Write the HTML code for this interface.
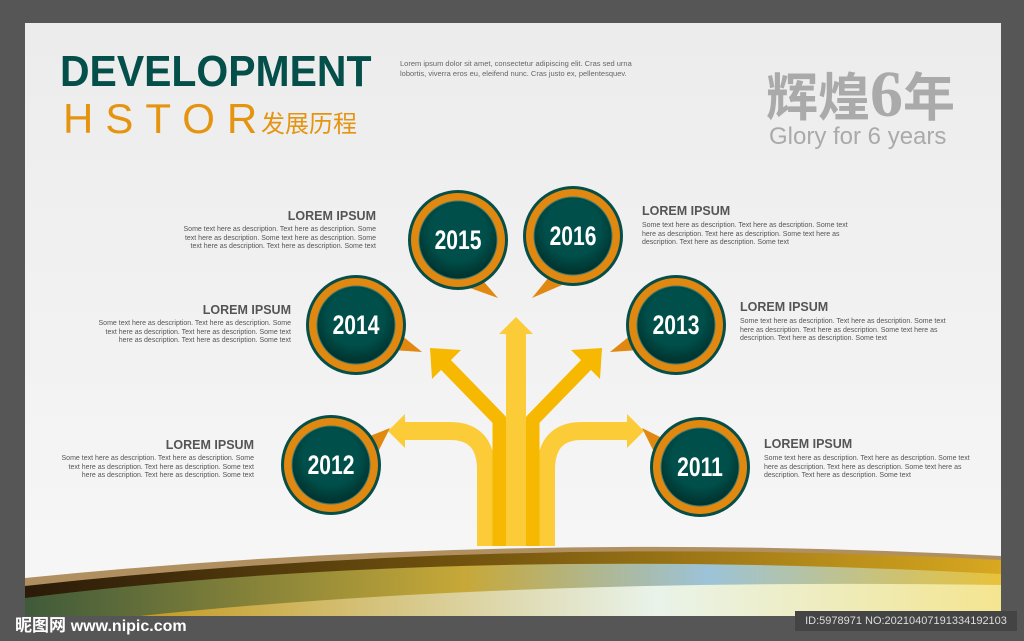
<!DOCTYPE html>
<html><head><meta charset="utf-8"><style>
body{margin:0;width:1024px;height:641px;background:#565656;position:relative;overflow:hidden;font-family:"Liberation Sans","Noto Sans CJK SC",sans-serif}
#card{position:absolute;left:25px;top:23px;width:976px;height:593px;background:linear-gradient(#ececec,#f7f7f7);overflow:hidden}
.t{position:absolute;font-size:12.5px;font-weight:bold;color:#555}
.d{position:absolute;font-size:7px;line-height:8.6px;color:#555;width:200px}
.r{text-align:right}
.y{position:absolute;color:#fff;font-weight:bold;font-size:27px;transform:scaleX(.78);width:100px;text-align:center;font-family:"Liberation Sans Narrow","Liberation Sans",sans-serif}
</style></head><body>
<div id="card">
<svg width="976" height="593" style="position:absolute;left:0;top:0">
<defs>
<radialGradient id="g" cx="50%" cy="40%" r="60%"><stop offset="0.6" stop-color="#004f4a"/><stop offset="1" stop-color="#00302c"/></radialGradient>
<linearGradient id="w1" x1="0" x2="1"><stop offset="0" stop-color="#2a1a08"/><stop offset=".5" stop-color="#7a5a10"/><stop offset="1" stop-color="#d8a820"/></linearGradient>
<linearGradient id="w2" x1="0" x2="1"><stop offset="0" stop-color="#3f5a3a"/><stop offset=".45" stop-color="#c7a838"/><stop offset=".7" stop-color="#9cc3d8"/><stop offset="1" stop-color="#e8c23a"/></linearGradient>
<linearGradient id="w3" x1="0" x2="1"><stop offset="0" stop-color="#c49a20"/><stop offset=".6" stop-color="#e9f3ea"/><stop offset="1" stop-color="#f4e590"/></linearGradient>
</defs>
<g transform="translate(-25,-23)">
<g fill="none" stroke-linejoin="round">
<path d="M486,546 V470 Q486,431 450,431 H404" stroke="#fbcb38" stroke-width="18"/>
<path d="M546,546 V470 Q546,431 582,431 H628" stroke="#fbcb38" stroke-width="18"/>
<path d="M499.5,546 V420 L445,364" stroke="#f6b800" stroke-width="14"/>
<path d="M532.5,546 V420 L587,364" stroke="#f6b800" stroke-width="14"/>
<path d="M516,546 V330" stroke="#fbcb38" stroke-width="20"/>
</g>
<polygon points="405,414 388,431 405,448" fill="#fbcb38"/>
<polygon points="627,414 644,431 627,448" fill="#fbcb38"/>
<polygon points="499,334 516,317 533,334" fill="#fbcb38"/>
<polygon points="430,348 461,350 432,379" fill="#f6b800"/>
<polygon points="602,348 571,350 600,379" fill="#f6b800"/>
<g stroke="#3a7a72" stroke-width="0">
<polygon points="478,275 498,298 470,288" fill="#e08810"/>
<circle cx="458" cy="240" r="50" fill="#064e48"/><circle cx="458" cy="240" r="47" fill="#e08810"/><circle cx="458" cy="240" r="39" fill="url(#g)" stroke-width="1"/>
<polygon points="553,272 532,298 562,285" fill="#e08810"/>
<circle cx="573" cy="236" r="50" fill="#064e48"/><circle cx="573" cy="236" r="47" fill="#e08810"/><circle cx="573" cy="236" r="39" fill="url(#g)" stroke-width="1"/>
<polygon points="395,330 422,352 392,350" fill="#e08810"/>
<circle cx="356" cy="325" r="50" fill="#064e48"/><circle cx="356" cy="325" r="47" fill="#e08810"/><circle cx="356" cy="325" r="39" fill="url(#g)" stroke-width="1"/>
<polygon points="637,330 610,352 640,350" fill="#e08810"/>
<circle cx="676" cy="325" r="50" fill="#064e48"/><circle cx="676" cy="325" r="47" fill="#e08810"/><circle cx="676" cy="325" r="39" fill="url(#g)" stroke-width="1"/>
<polygon points="360,440 390,428 375,458" fill="#e08810"/>
<circle cx="331" cy="465" r="50" fill="#064e48"/><circle cx="331" cy="465" r="47" fill="#e08810"/><circle cx="331" cy="465" r="39" fill="url(#g)" stroke-width="1"/>
<polygon points="670,442 642,428 658,460" fill="#e08810"/>
<circle cx="700" cy="467" r="50" fill="#064e48"/><circle cx="700" cy="467" r="47" fill="#e08810"/><circle cx="700" cy="467" r="39" fill="url(#g)" stroke-width="1"/>
</g>
<path d="M25,578 Q500,530 1001,556 V616 H25Z" fill="#b09060"/>
<path d="M25,586 Q500,534 1001,560 V616 H25Z" fill="url(#w1)"/>
<path d="M25,598 Q450,545 1001,574 V616 H25Z" fill="url(#w2)"/>
<path d="M140,616 Q500,578 1001,585 V616Z" fill="url(#w3)"/>
</g>
</svg>
<div style="position:absolute;left:35px;top:24px;font-size:44px;font-weight:bold;color:#044f49;transform:scaleX(.93);transform-origin:left">DEVELOPMENT</div>
<div style="position:absolute;left:38px;top:72px;font-size:42px;color:#e59410;letter-spacing:12px">HSTOR</div>
<div style="position:absolute;left:236px;top:81px;font-size:24px;color:#e59410">发展历程</div>
<div style="position:absolute;left:375px;top:36px;font-size:7.5px;line-height:10px;color:#666">Lorem ipsum dolor sit amet, consectetur adipiscing elit. Cras sed urna<br>lobortis, viverra eros eu, eleifend nunc. Cras justo ex, pellentesquev.</div>
<div style="position:absolute;left:741px;top:40px;font-size:52px;font-weight:bold;color:#aaa;font-family:'Noto Sans CJK SC',sans-serif;line-height:62px">辉煌<span style="font-family:'Liberation Serif',serif;font-size:66px">6</span>年</div>
<div style="position:absolute;left:744px;top:100px;font-size:24px;color:#aaa">Glory for 6 years</div>

<div class="y" style="left:383px;top:202px">2015</div>
<div class="y" style="left:498px;top:198px">2016</div>
<div class="y" style="left:281px;top:287px">2014</div>
<div class="y" style="left:601px;top:287px">2013</div>
<div class="y" style="left:256px;top:427px">2012</div>
<div class="y" style="left:625px;top:429px">2011</div>

<div class="t r" style="right:625px;top:186px">LOREM IPSUM</div>
<div class="d r" style="right:625px;top:203px">Some text here as description. Text here as description. Some text here as description. Some text here as description. Some text here as description. Text here as description. Some text</div>
<div class="t" style="left:617px;top:181px">LOREM IPSUM</div>
<div class="d" style="left:617px;top:199px;width:215px">Some text here as description. Text here as description. Some text here as description. Text here as description. Some text here as description. Text here as description. Some text</div>
<div class="t r" style="right:710px;top:280px">LOREM IPSUM</div>
<div class="d r" style="right:710px;top:297px">Some text here as description. Text here as description. Some text here as description. Text here as description. Some text here as description. Text here as description. Some text</div>
<div class="t" style="left:715px;top:277px">LOREM IPSUM</div>
<div class="d" style="left:715px;top:295px;width:215px">Some text here as description. Text here as description. Some text here as description. Text here as description. Some text here as description. Text here as description. Some text</div>
<div class="t r" style="right:747px;top:415px">LOREM IPSUM</div>
<div class="d r" style="right:747px;top:432px">Some text here as description. Text here as description. Some text here as description. Text here as description. Some text here as description. Text here as description. Some text</div>
<div class="t" style="left:739px;top:414px">LOREM IPSUM</div>
<div class="d" style="left:739px;top:432px;width:215px">Some text here as description. Text here as description. Some text here as description. Text here as description. Some text here as description. Text here as description. Some text</div>
</div>
<div style="position:absolute;left:15px;top:611px;color:#fff;font-size:17px;font-weight:bold">昵图网 <span style="font-size:16px">www.nipic.com</span></div>
<div style="position:absolute;left:795px;top:611px;width:222px;height:20px;background:#444;color:#ddd;font-size:11px;line-height:20px;text-align:center">ID:5978971 NO:20210407191334192103</div>
</body></html>
